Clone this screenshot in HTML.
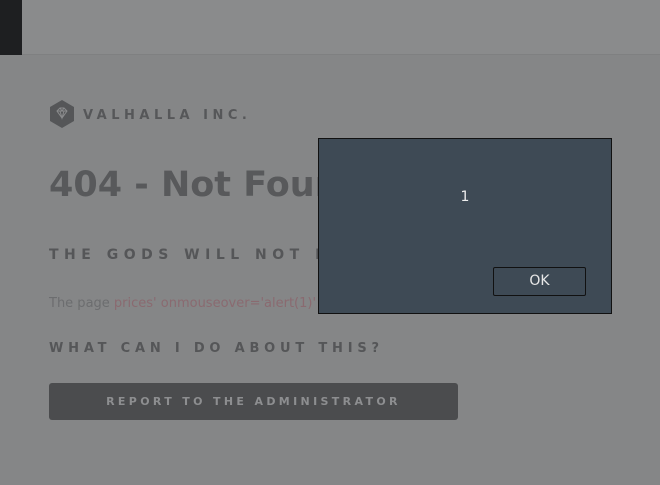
<!DOCTYPE html>
<html><head><style>
body{margin:0;width:660px;height:485px;overflow:hidden;background:#858687;font-family:"DejaVu Sans","Liberation Sans",sans-serif;position:relative}
.top{position:absolute;left:0;top:0;width:660px;height:54px;background:#8a8b8c;border-bottom:1px solid #7f8081}
.blk{position:absolute;left:0;top:0;width:22px;height:55px;background:#1e1f21}
.a{position:absolute;white-space:nowrap}
.logo{left:50px;top:100px}
.brand{left:83px;top:108px;font-size:13px;font-weight:bold;letter-spacing:4.5px;color:#565759}
h1{position:absolute;left:49px;top:165px;margin:0;font-size:35px;font-weight:bold;color:#58595b;white-space:nowrap}
.h2{font-size:14px;font-weight:bold;letter-spacing:5.5px;color:#555658}
.p{left:49px;top:296px;font-size:13px;color:#6c6d6f}
.p span{color:#8a6a70}
.btn{position:absolute;left:49px;top:383px;width:409px;height:37px;background:#4b4c4e;border-radius:3px;color:#8d8e90;font-size:11px;font-weight:bold;letter-spacing:3.35px;text-align:center;line-height:37px}
.dlg{position:absolute;left:318px;top:138px;width:292px;height:174px;background:#3e4a55;border:1px solid #111}
.ok{position:absolute;left:174px;top:128px;width:91px;height:27px;border:1px solid #111;border-radius:2px;color:#e8e8e8;font-size:14px;text-align:center;line-height:27px}
</style></head><body>
<div class="top"></div><div class="blk"></div>
<svg class="a logo" width="24" height="28" viewBox="0 0 24 28"><polygon points="12,0 24,7 24,21 12,28 0,21 0,7" fill="#555658"/><path d="M7 11 L10 8 H14 L17 11 L12 18 Z M7 11 H17 M10 8 L12 11 L14 8 M10 11 L12 18 L14 11" fill="none" stroke="#8a8b8c" stroke-width="1"/></svg>
<div class="a brand">VALHALLA INC.</div>
<h1>404 - Not Found</h1>
<div class="a h2" style="left:49px;top:247px">THE GODS WILL NOT BE PLEASED</div>
<div class="a p">The page <span>prices' onmouseover='alert(1)' could not be found.</span></div>
<div class="a h2" style="left:49px;top:341px;font-size:13px;letter-spacing:4.8px">WHAT CAN I DO ABOUT THIS?</div>
<div class="btn">REPORT TO THE ADMINISTRATOR</div>
<div class="dlg">
<div class="a" style="left:0;width:292px;text-align:center;top:50px;color:#eee;font-size:14px">1</div>
<div class="ok">OK</div>
</div>
</body></html>
